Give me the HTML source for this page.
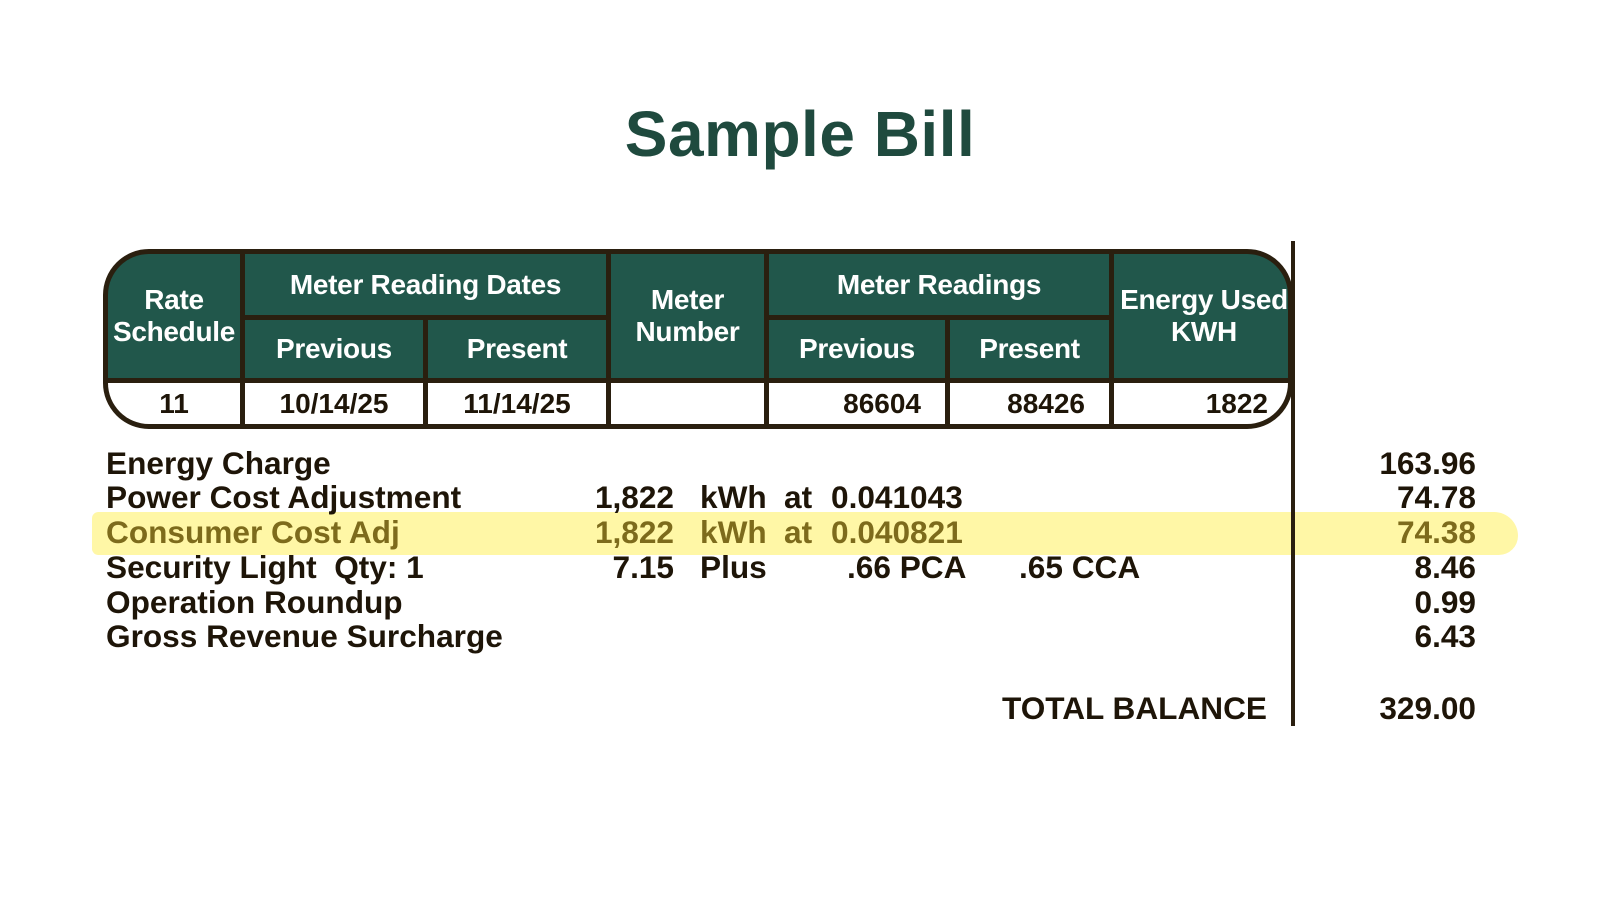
<!DOCTYPE html>
<html><head><meta charset="utf-8"><style>
*{margin:0;padding:0;box-sizing:border-box}
body{width:1600px;height:900px;background:#fff;position:relative;overflow:hidden;font-family:"Liberation Sans",Arial,sans-serif}
.title{position:absolute;left:0;width:1600px;top:97px;text-align:center;font-weight:bold;font-size:64px;color:#1f4a3e;letter-spacing:0.5px}
.tbl{position:absolute;left:103px;top:249px;width:1190px;height:180px;border:5px solid #2a1f0f;border-radius:46px;overflow:hidden;background:#2a1f0f}
.c{position:absolute;display:flex;align-items:center;justify-content:center;text-align:center;font-weight:bold}
.g{background:#21574b;color:#fff;font-size:28px;line-height:32px;letter-spacing:-0.3px}
.w{background:#fff;color:#1e1508;font-size:28px}
.r{justify-content:flex-end}
.t{position:absolute;font-weight:bold;font-size:31.6px;line-height:32px;color:#1e1508;white-space:nowrap}
.hl{color:#7d6b1c}
.ra{text-align:right}
</style></head><body>
<div class="title">Sample Bill</div>

<div style="position:absolute;left:92px;top:512px;width:1426px;height:43px;background:#fff7a6;border-radius:8px 30px 24px 8px"></div>

<div class="tbl">
 <div class="c g" style="left:0;top:0;width:132px;height:124px">Rate<br>Schedule</div>
 <div class="c g" style="left:137px;top:0;width:361px;height:61px">Meter Reading Dates</div>
 <div class="c g" style="left:137px;top:66px;width:178px;height:58px">Previous</div>
 <div class="c g" style="left:320px;top:66px;width:178px;height:58px">Present</div>
 <div class="c g" style="left:503px;top:0;width:153px;height:124px">Meter<br>Number</div>
 <div class="c g" style="left:661px;top:0;width:340px;height:61px">Meter Readings</div>
 <div class="c g" style="left:661px;top:66px;width:176px;height:58px">Previous</div>
 <div class="c g" style="left:842px;top:66px;width:159px;height:58px">Present</div>
 <div class="c g" style="left:1006px;top:0;width:180px;height:124px">Energy Used<br>KWH</div>
 <div class="c w" style="left:0;top:129px;width:132px;height:42px">11</div>
 <div class="c w" style="left:137px;top:129px;width:178px;height:42px">10/14/25</div>
 <div class="c w" style="left:320px;top:129px;width:178px;height:42px">11/14/25</div>
 <div class="c w" style="left:503px;top:129px;width:153px;height:42px"></div>
 <div class="c w r" style="left:661px;top:129px;width:176px;height:42px;padding-right:24px">86604</div>
 <div class="c w r" style="left:842px;top:129px;width:159px;height:42px;padding-right:24px">88426</div>
 <div class="c w r" style="left:1006px;top:129px;width:180px;height:42px;padding-right:26px">1822</div>
</div>

<div style="position:absolute;left:1291px;top:241px;width:4px;height:485px;background:#2a1f0f"></div>

<div class="t" style="left:106px;top:447px">Energy Charge</div>
<div class="t" style="left:106px;top:481px">Power Cost Adjustment</div>
<div class="t hl" style="left:106px;top:516px">Consumer Cost Adj</div>
<div class="t" style="left:106px;top:551px">Security Light&nbsp; Qty: 1</div>
<div class="t" style="left:106px;top:586px">Operation Roundup</div>
<div class="t" style="left:106px;top:620px">Gross Revenue Surcharge</div>

<div class="t ra" style="right:926px;top:481px">1,822</div>
<div class="t" style="left:700px;top:481px">kWh</div>
<div class="t" style="left:784px;top:481px">at</div>
<div class="t" style="left:831px;top:481px">0.041043</div>
<div class="t ra hl" style="right:926px;top:516px">1,822</div>
<div class="t hl" style="left:700px;top:516px">kWh</div>
<div class="t hl" style="left:784px;top:516px">at</div>
<div class="t hl" style="left:831px;top:516px">0.040821</div>
<div class="t ra" style="right:926px;top:551px">7.15</div>
<div class="t" style="left:700px;top:551px">Plus</div>
<div class="t" style="left:847px;top:551px">.66 PCA</div>
<div class="t" style="left:1019px;top:551px">.65 CCA</div>

<div class="t ra" style="right:124px;top:447px">163.96</div>
<div class="t ra" style="right:124px;top:481px">74.78</div>
<div class="t ra hl" style="right:124px;top:516px">74.38</div>
<div class="t ra" style="right:124px;top:551px">8.46</div>
<div class="t ra" style="right:124px;top:586px">0.99</div>
<div class="t ra" style="right:124px;top:620px">6.43</div>

<div class="t ra" style="right:333px;top:692px">TOTAL BALANCE</div>
<div class="t ra" style="right:124px;top:692px">329.00</div>
</body></html>
